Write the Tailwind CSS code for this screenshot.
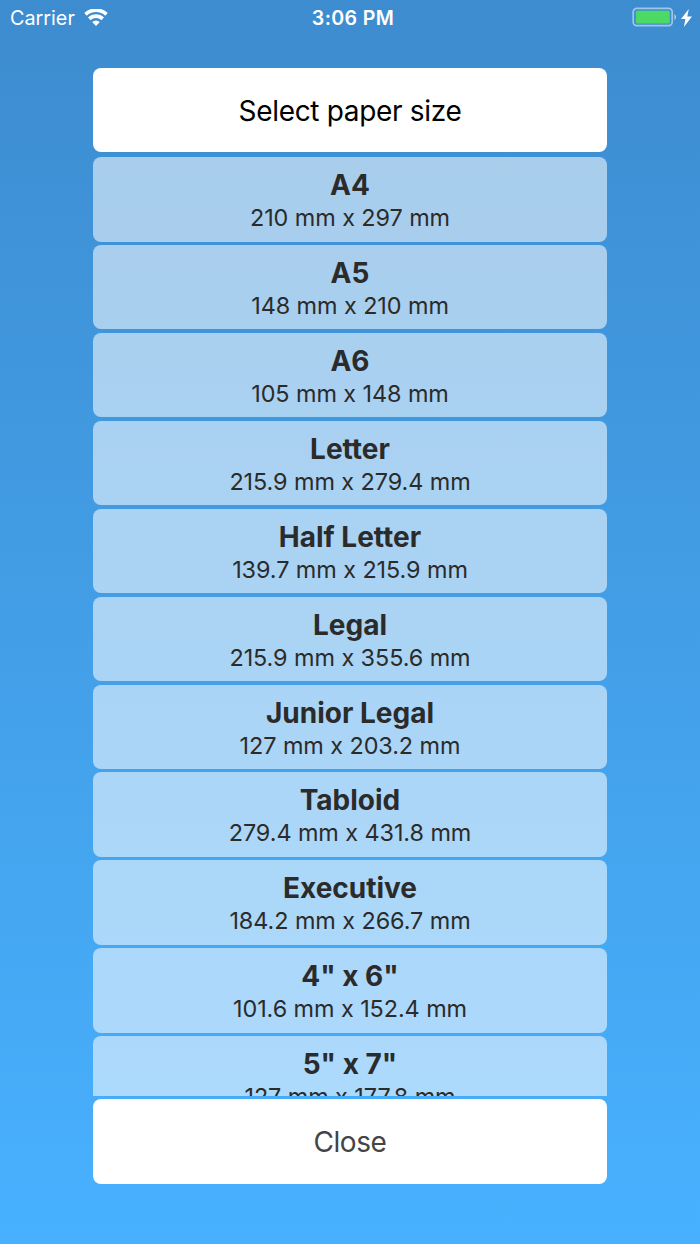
<!DOCTYPE html>
<html lang="en"><head><meta charset="utf-8"><title>Paper size</title>
<script src="https://cdn.jsdelivr.net/npm/@tailwindcss/browser@4"></script></head>
<body class="h-[1244px] overflow-hidden bg-linear-to-b from-[#3d8ccf] to-[#48b1ff] font-['Inter',sans-serif] text-[#2b2b2b]">
<header class="grid h-9 grid-cols-[1fr_auto_1fr] items-center pl-2.5 pr-[7px] text-white">
<div class="flex items-center gap-[9px] text-[19.8px] font-[380]"><span class="pt-px">Carrier</span>
<svg class="h-[18px] w-6" viewBox="0 0 24 18"><path fill="none" stroke="white" stroke-width="3.6" d="M1.5 5.4a15 15 0 0 1 21 0M5.3 9.9a9.5 9.5 0 0 1 13.4 0"/><path fill="white" d="M12 17l-3.8-4a5.4 5.4 0 0 1 7.6 0z"/></svg></div>
<div class="pl-[3px] pt-0.5 text-[19.6px] font-semibold tracking-[0.35px]">3:06 PM</div>
<div class="flex items-center justify-end gap-[3px]"><svg class="h-5 w-[45px] overflow-visible" viewBox="0 0 45 20"><rect x="0.2" y="0.3" width="39" height="17.4" rx="3.6" fill="none" stroke="white" stroke-opacity=".5" stroke-width="1.7"/><rect x="2.8" y="2.8" width="34" height="12.6" rx="1.5" fill="#4cd964"/><path d="M41.4 6q3.6 3.1 0 6.2z" fill="white" fill-opacity=".55"/></svg><svg class="mb-px mr-px h-[18px] w-[11px]" viewBox="0 0 11 18"><path fill="white" d="M7.8 0L0 10h4.4L2.9 18l8.1-10.6H6.3z"/></svg></div>
</header>
<main class="mx-auto mt-8 w-[514px] text-center">
<h1 class="flex h-[84px] items-center justify-center rounded-lg bg-white pt-0.5 text-[28px] font-[380] tracking-[-0.33px] text-black">Select paper size</h1>
<ul id="sizes" class="mt-[5.2px] flex h-[938.6px] flex-col gap-[3.5px] overflow-hidden"></ul>
<button class="mt-[3.2px] h-[84.8px] w-full rounded-lg bg-white pt-0.5 text-[28px] font-[380] tracking-[-0.4px] text-[#444]">Close</button>
</main>
<script>
const sizes=[["A4","210 mm x 297 mm"],["A5","148 mm x 210 mm"],["A6","105 mm x 148 mm"],["Letter","215.9 mm x 279.4 mm"],["Half Letter","139.7 mm x 215.9 mm"],["Legal","215.9 mm x 355.6 mm"],["Junior Legal","127 mm x 203.2 mm"],["Tabloid","279.4 mm x 431.8 mm"],["Executive","184.2 mm x 266.7 mm"],['4" x 6"',"101.6 mm x 152.4 mm"],['5" x 7"',"127 mm x 177.8 mm"]];
document.getElementById("sizes").innerHTML=sizes.map(([n,d])=>`<li class="h-[84.4px] shrink-0 rounded-lg bg-white/55 pt-3"><div class="text-[28px] leading-8 font-bold">${n}</div><div class="text-[23.4px] leading-[34.4px] font-[380] tracking-[-0.07px]">${d}</div></li>`).join("");
</script></body></html>
